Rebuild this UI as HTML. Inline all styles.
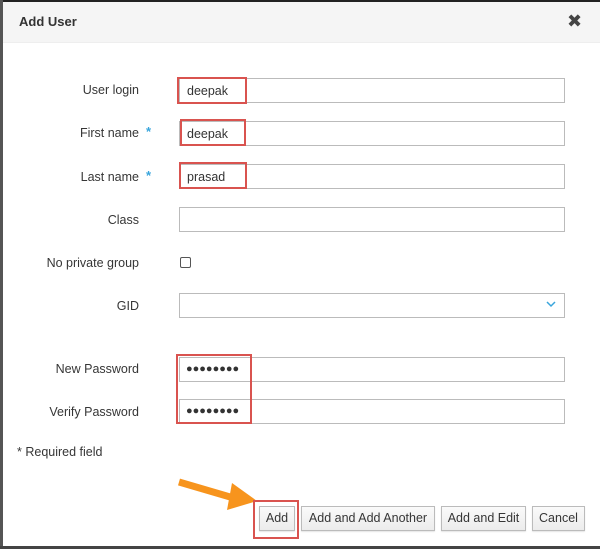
<!DOCTYPE html>
<html><head><style>
*{box-sizing:border-box;margin:0;padding:0}
body{width:600px;height:549px;overflow:hidden;background:#fff;font-family:"Liberation Sans","DejaVu Sans",sans-serif;font-size:12px;color:#333;position:relative}
.a{position:absolute}
.lbl{position:absolute;right:461px;text-align:right;font-size:12.5px;color:#363636;white-space:nowrap}
.inp{position:absolute;left:179px;width:386px;height:25px;border:1px solid #bbb;background:#fff;font-size:12.5px;padding:5px 7px;color:#333}
.red{position:absolute;border:2px solid #d9534f}
.star{position:absolute;left:146px;color:#39a5dc;font-size:13px;font-weight:bold}
.btn{position:absolute;top:506px;height:25px;border:1px solid #bbb;background:linear-gradient(#fafafa,#ececec);font-size:12.5px;color:#363636;text-align:center;line-height:23px;box-shadow:0 1px 1px rgba(0,0,0,.1)}
</style></head><body>
<div class="a" style="left:0;top:0;width:600px;height:2px;background:#222"></div>
<div class="a" style="left:0;top:0;width:3px;height:549px;background:#555"></div>
<div class="a" style="left:0;top:546px;width:600px;height:3px;background:#444"></div>
<div class="a" style="left:3px;top:2px;width:597px;height:41px;background:#f5f5f5;border-bottom:1px solid #eee"></div>
<div class="a" style="left:19px;top:14px;font-weight:bold;font-size:13px;color:#333">Add User</div>
<div class="a" style="left:567px;top:11px;font-weight:bold;font-size:18px;color:#444">✖</div>

<div class="lbl" style="top:83px">User login</div>
<div class="inp" style="top:78px">deepak</div>
<div class="red" style="left:177px;top:77px;width:70px;height:27px"></div>

<div class="lbl" style="top:126px">First name</div><div class="star" style="top:124px">*</div>
<div class="inp" style="top:121px">deepak</div>
<div class="red" style="left:180px;top:119px;width:66px;height:27px"></div>

<div class="lbl" style="top:170px">Last name</div><div class="star" style="top:168px">*</div>
<div class="inp" style="top:164px">prasad</div>
<div class="red" style="left:179px;top:162px;width:68px;height:27px"></div>

<div class="lbl" style="top:213px">Class</div>
<div class="inp" style="top:207px"></div>

<div class="lbl" style="top:256px">No private group</div>
<div class="a" style="left:180px;top:257px;width:11px;height:11px;border:1px solid #555;border-radius:2px"></div>

<div class="lbl" style="top:299px">GID</div>
<div class="inp" style="top:293px"></div>
<svg class="a" style="left:546px;top:300px" width="10" height="8"><path d="M1 2 L5 6 L9 2" stroke="#39a5dc" stroke-width="1.5" fill="none"/></svg>

<div class="lbl" style="top:362px">New Password</div>
<div class="inp" style="top:357px;font-size:11px;padding-left:6px">●●●●●●●●</div>
<div class="lbl" style="top:405px">Verify Password</div>
<div class="inp" style="top:399px;font-size:11px;padding-left:6px">●●●●●●●●</div>
<div class="red" style="left:176px;top:354px;width:76px;height:70px"></div>

<div class="a" style="left:17px;top:445px;color:#363636;font-size:12.5px">* Required field</div>

<svg class="a" style="left:175px;top:475px" width="85" height="38"><path d="M4 7 L62 24" stroke="#f7941d" stroke-width="7"/><path d="M57 8 L82 26 L52 35 Z" fill="#f7941d"/></svg>

<div class="btn" style="left:259px;width:36px">Add</div>
<div class="red" style="left:253px;top:500px;width:46px;height:39px"></div>
<div class="btn" style="left:301px;width:134px">Add and Add Another</div>
<div class="btn" style="left:441px;width:85px">Add and Edit</div>
<div class="btn" style="left:532px;width:53px">Cancel</div>
</body></html>
